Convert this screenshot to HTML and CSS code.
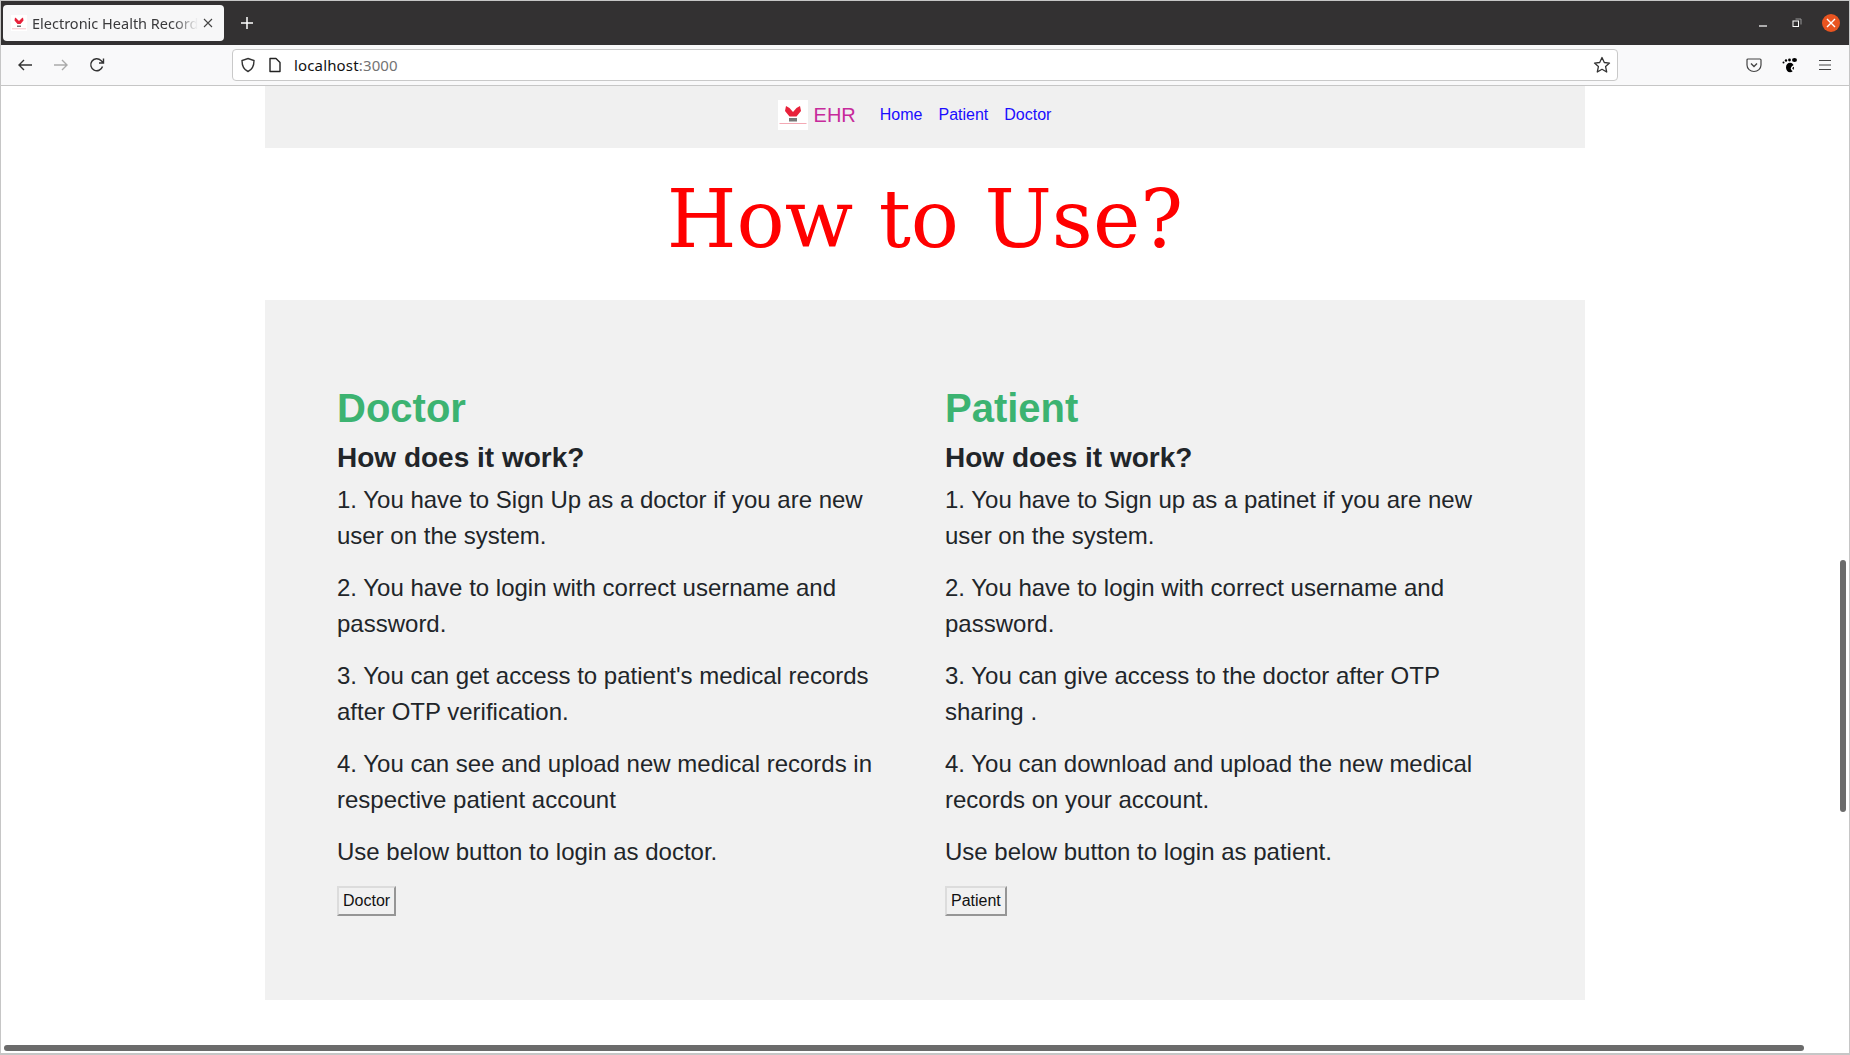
FILE: index.html
```html
<!DOCTYPE html>
<html lang="en">
<head>
  <meta charset="UTF-8">
  <title>Electronic Health Records</title>
  <link rel="stylesheet" href="styles.css">
</head>
<body>
  <div class="window">
    <!-- tab strip -->
    <div class="tabbar">
      <div class="tab">
        <span class="favicon">
          <svg width="16" height="16" viewBox="0 0 16 16"><rect width="16" height="16" fill="#fff"/><path d="M4 2.500l1.500 1L8 6l2.500-2.500L12 2.500l.5 3-3 3.500h-3l-3-3.500z" fill="#e8213a"/><rect x="6" y="10.500" width="4" height="1.500" fill="#777"/><rect x="1" y="13.500" width="14" height=".7" fill="#f4a9b4"/></svg>
        </span>
        <span class="tab-title">Electronic Health Records</span>
        <svg class="tab-close" width="10" height="10" viewBox="0 0 10 10"><path d="M1 1l8 8M9 1l-8 8" stroke="#444" stroke-width="1.100"/></svg>
      </div>
      <svg class="newtab" width="14" height="14" viewBox="0 0 14 14"><path d="M7 1v12M1 7h12" stroke="#fff" stroke-width="1.500"/></svg>
      <div class="winbtns">
        <svg width="10" height="10" viewBox="0 0 10 10"><path d="M1 8h8" stroke="#fff" stroke-width="1.200"/></svg>
        <svg width="10" height="10" viewBox="0 0 10 10"><rect x="1" y="3" width="5.500" height="5.500" fill="none" stroke="#fff"/><path d="M3.500 1h5.500v5.500" fill="none" stroke="#999"/></svg>
        <span class="winclose"><svg width="10" height="10" viewBox="0 0 10 10"><path d="M1 1l8 8M9 1l-8 8" stroke="#fff" stroke-width="1.400"/></svg></span>
      </div>
    </div>

    <!-- nav toolbar -->
    <div class="toolbar">
      <div class="navbtns">
        <svg width="16" height="16" viewBox="0 0 16 16"><path d="M15 8H2M7 3L2 8l5 5" fill="none" stroke="#333" stroke-width="1.400"/></svg>
        <svg width="16" height="16" viewBox="0 0 16 16"><path d="M1 8h13M9 3l5 5-5 5" fill="none" stroke="#aaa" stroke-width="1.400"/></svg>
        <svg width="16" height="16" viewBox="0 0 16 16"><path d="M13.500 9.500A6 6 0 1 1 12 3.500L14 5.500M14.500 1.500v4.500h-4.500" fill="none" stroke="#333" stroke-width="1.400"/></svg>
      </div>
      <div class="urlbar">
        <svg width="16" height="16" viewBox="0 0 16 16"><path d="M8 1.500l6 2c0 5-1.500 9-6 11-4.500-2-6-6-6-11z" fill="none" stroke="#333" stroke-width="1.400"/></svg>
        <svg class="pageicon" width="14" height="16" viewBox="0 0 14 16"><path d="M2 1.500h6l4 4v9H2z" fill="none" stroke="#222" stroke-width="1.400" stroke-linejoin="round"/></svg>
        <span class="url"><span class="host">localhost</span>:3000</span>
        <svg class="star" width="18" height="18" viewBox="0 0 18 18"><path d="M9 1.500l2.300 5 5.200.6-3.900 3.500 1.100 5.400L9 13.300 4.300 16l1.100-5.400L1.500 7.100l5.200-.6z" fill="none" stroke="#333" stroke-width="1.300" stroke-linejoin="round"/></svg>
      </div>
      <div class="tools">
        <svg width="16" height="16" viewBox="0 0 16 16"><path d="M2 2h12a1 1 0 0 1 1 1v5a7 6.500 0 0 1-14 0V3a1 1 0 0 1 1-1z" fill="none" stroke="#444" stroke-width="1.200"/><path d="M5 6.500l3 3 3-3" fill="none" stroke="#444" stroke-width="1.400"/></svg>
        <svg width="16" height="16" viewBox="0 0 16 16"><ellipse cx="8" cy="10.500" rx="4" ry="4.800" fill="#000"/><circle cx="1.500" cy="5.500" r="1" fill="#000"/><circle cx="4" cy="3.500" r="1.200" fill="#000"/><circle cx="7.500" cy="3" r="1.400" fill="#000"/><ellipse cx="12.500" cy="3" rx="2.500" ry="2" fill="#000"/><path d="M13.500 9a3 3 0 0 0-4 2.500 3 3 0 0 0 4 2" fill="none" stroke="#fff" stroke-width="1.500"/></svg>
        <svg width="14" height="12" viewBox="0 0 14 12"><path d="M1 1.500h12M1 6h12M1 10.500h12" stroke="#444" stroke-width="1.200"/></svg>
      </div>
    </div>

    <!-- page -->
    <div class="viewport">
      <div class="container">
        <nav class="sitenav">
          <span class="brand-logo">
            <svg width="30" height="30" viewBox="0 0 30 30"><rect width="30" height="30" fill="#fff"/><path d="M8 6l3.500 2 3.500 4 3.500-4 3.500-2 1 5-4.500 5.500h-7L7 11z" fill="#e8213a"/><rect x="11" y="18" width="8" height="3.500" fill="#777"/><rect x="1.500" y="23" width="27" height="1" fill="#f4a9b4"/></svg>
          </span>
          <a class="brand" href="#">EHR</a>
          <a class="navlink first" href="#">Home</a>
          <a class="navlink" href="#">Patient</a>
          <a class="navlink" href="#">Doctor</a>
        </nav>

        <h1 class="title">How to Use?</h1>

        <section class="howto">
          <div class="col">
            <h2>Doctor</h2>
            <h3>How does it work?</h3>
            <p>1. You have to Sign Up as a doctor if you are new user on the system.</p>
            <p>2. You have to login with correct username and password.</p>
            <p>3. You can get access to patient's medical records after OTP verification.</p>
            <p>4. You can see and upload new medical records in respective patient account</p>
            <p>Use below button to login as doctor.</p>
            <button>Doctor</button>
          </div>
          <div class="col">
            <h2>Patient</h2>
            <h3>How does it work?</h3>
            <p>1. You have to Sign up as a patinet if you are new user on the system.</p>
            <p>2. You have to login with correct username and password.</p>
            <p>3. You can give access to the doctor after OTP sharing .</p>
            <p>4. You can download and upload the new medical records on your account.</p>
            <p>Use below button to login as patient.</p>
            <button>Patient</button>
          </div>
        </section>
      </div>
      <div class="vscroll"></div>
      <div class="hscroll"></div>
    </div>
  </div>
</body>
</html>
```

FILE: styles.css
```css
* {
  box-sizing: border-box;
}
html, body {
  margin: 0;
  height: 100%;
  overflow: hidden;
}
body {
  font-family: "Liberation Sans", Arial, sans-serif;
  color: #212529;
  background: #fff;
}
.window {
  height: 1055px;
  display: flex;
  flex-direction: column;
  border: 1px solid #c6c6c6;
  border-bottom-width: 2px;
}

/* tab strip */
.tabbar {
  height: 44px;
  background: #333132;
  display: flex;
  align-items: center;
  padding: 3px 9px 3px 2px;
}
.tab {
  width: 221px;
  height: 36px;
  background: #f7f7f8;
  border-radius: 4px;
  display: flex;
  align-items: center;
  padding: 0 11px 0 8px;
}
.favicon {
  width: 16px;
  height: 16px;
  flex: none;
  margin-right: 5px;
}
.favicon svg, .brand-logo svg {
  display: block;
}
.tab-title {
  font-family: "Noto Sans", sans-serif;
  font-size: 14.5px;
  color: #3a3a3c;
  flex: 1;
  white-space: nowrap;
  overflow: hidden;
  -webkit-mask-image: linear-gradient(to right, #000 85%, transparent);
  mask-image: linear-gradient(to right, #000 85%, transparent);
}
.tab-close {
  margin-left: 5px;
}
.newtab {
  margin-left: 16px;
}
.winbtns {
  margin-left: auto;
  display: flex;
  align-items: center;
  gap: 24px;
}
.winclose {
  width: 18px;
  height: 18px;
  border-radius: 50%;
  background: #e95420;
  display: flex;
  align-items: center;
  justify-content: center;
  margin-left: -4px;
}

/* nav toolbar */
.toolbar {
  height: 41px;
  background: #f9f9fa;
  border-bottom: 1px solid #c6c6c6;
  display: flex;
  align-items: center;
}
.navbtns {
  width: 231px;
  padding-left: 16px;
  display: flex;
  gap: 20px;
  flex: none;
}
.urlbar {
  width: 1386px;
  height: 32px;
  background: #fff;
  border: 1px solid #c9c9c9;
  border-radius: 4px;
  display: flex;
  align-items: center;
  padding: 0 6px 0 7px;
}
.pageicon {
  margin-left: 12px;
}
.url {
  font-family: "Noto Sans", sans-serif;
  font-size: 15px;
  letter-spacing: .15px;
  color: #737373;
  margin-left: 12px;
}
.host {
  color: #111;
}
.star {
  margin-left: auto;
}
.tools {
  flex: 1;
  display: flex;
  align-items: center;
  justify-content: flex-end;
  gap: 20px;
  padding-right: 17px;
}

/* page */
.viewport {
  flex: 1;
  position: relative;
  overflow: hidden;
  background: #fff;
}
.container {
  width: 1320px;
  margin-left: 264px;
}
.sitenav {
  height: 62px;
  background: #f0f0f0;
  display: flex;
  align-items: center;
  justify-content: center;
  padding: 0 21px 4px 0;
  font-size: 16px;
}
.brand-logo {
  width: 30px;
  height: 30px;
  margin-right: 6px;
}
.brand {
  font-size: 20px;
  color: #c72a9b;
  text-decoration: none;
}
.navlink {
  color: #1a0dff;
  text-decoration: none;
  margin-left: 16px;
}
.navlink.first {
  margin-left: 24px;
}
.title {
  height: 152px;
  margin: 0;
  text-align: center;
  font-family: "DejaVu Serif", serif;
  font-size: 80px;
  font-weight: 400;
  line-height: 144px;
  color: #ff0000;
}
.howto {
  height: 700px;
  background: #f1f1f1;
  display: grid;
  grid-template-columns: 608px 608px;
  padding: 84px 24px 0 72px;
}
.col {
  padding-right: 68px;
}
.col h2 {
  margin: 0;
  font-size: 40px;
  line-height: 48px;
  color: #3cb371;
}
.col h3 {
  margin: 9px 0 0;
  font-size: 28px;
  line-height: 34px;
  color: #212529;
}
.col p {
  margin: 0 0 16px;
  font-size: 24px;
  line-height: 36px;
}
.col h3 + p {
  margin-top: 7px;
}
.col button {
  font-family: "Liberation Sans", Arial, sans-serif;
  font-size: 16px;
  height: 30px;
  padding: 1px 4px;
  background: #f1f1f1;
  color: #111;
  border: 2px solid;
  border-color: #dcdcdc #969696 #969696 #dcdcdc;
}
.vscroll {
  position: absolute;
  right: 3px;
  top: 474px;
  width: 6px;
  height: 252px;
  background: #6b6b6b;
  border-radius: 3px;
}
.hscroll {
  position: absolute;
  left: 3px;
  right: 45px;
  bottom: 2px;
  height: 6px;
  background: #6b6b6b;
  border-radius: 3px;
}
```
